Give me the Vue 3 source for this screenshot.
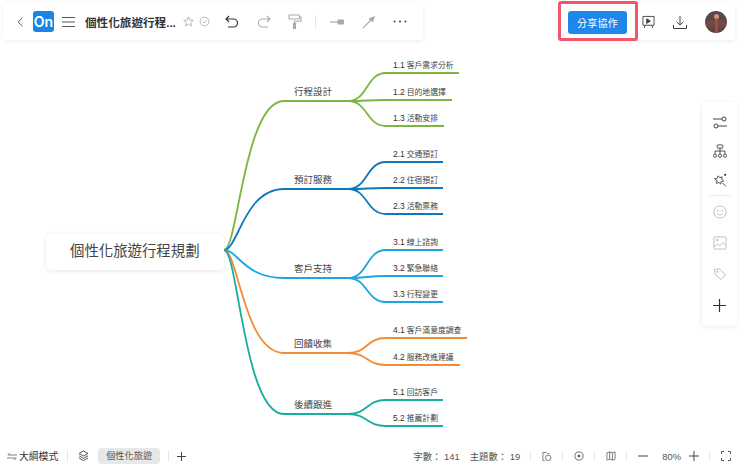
<script setup>
const ROOT = { x: 224, y: 250 };

const branches = [
  { title: '行程設計', y: 101, color: '#7cb540', leaves: [
    { num: '1.1', text: '客戶需求分析', y: 73, end: 459 },
    { num: '1.2', text: '目的地選擇', y: 100, end: 452 },
    { num: '1.3', text: '活動安排', y: 126, end: 444 },
  ] },
  { title: '預訂服務', y: 189, color: '#0e78bd', leaves: [
    { num: '2.1', text: '交通預訂', y: 162, end: 443 },
    { num: '2.2', text: '住宿預訂', y: 188, end: 443 },
    { num: '2.3', text: '活動票務', y: 214, end: 443 },
  ] },
  { title: '客戶支持', y: 278, color: '#1ba6e2', leaves: [
    { num: '3.1', text: '線上諮詢', y: 250, end: 443 },
    { num: '3.2', text: '緊急聯絡', y: 276, end: 443 },
    { num: '3.3', text: '行程變更', y: 302, end: 443 },
  ] },
  { title: '回饋收集', y: 353, color: '#f28b34', leaves: [
    { num: '4.1', text: '客戶滿意度調查', y: 338, end: 467 },
    { num: '4.2', text: '服務改進建議', y: 365, end: 460 },
  ] },
  { title: '後續跟進', y: 414, color: '#17ad9f', leaves: [
    { num: '5.1', text: '回訪客戶', y: 400, end: 443 },
    { num: '5.2', text: '推薦計劃', y: 426, end: 443 },
  ] },
];

const branchPath = (b) =>
  `M${ROOT.x} ${ROOT.y}C${ROOT.x + 14} ${ROOT.y} ${ROOT.x + 20} ${b.y} 284 ${b.y}L348 ${b.y}`;

const leafPath = (b, l) =>
  `M348 ${b.y}C368 ${b.y} 366 ${l.y} 386 ${l.y}L${l.end} ${l.y}`;
</script>

<template>
  <div class="page">
    <svg class="map" width="740" height="464" viewBox="0 0 740 464">
      <g v-for="b in branches" :key="b.title" fill="none" :stroke="b.color" stroke-width="1.8">
        <path v-for="l in b.leaves" :key="l.num" :d="leafPath(b, l)" />
        <path :d="branchPath(b)" />
      </g>
      <g v-for="b in branches" :key="b.title + '-t'">
        <text class="branch-text" x="294" :y="b.y - 6">{{ b.title }}</text>
        <text v-for="l in b.leaves" :key="l.num" class="leaf-text" x="393" :y="l.y - 5"><tspan class="leaf-num">{{ l.num }}</tspan> {{ l.text }}</text>
      </g>
    </svg>
    <div class="root-node">個性化旅遊行程規劃</div>

    <header class="top">
      <div class="panel left-panel">
        <svg class="back" width="7" height="10" viewBox="0 0 7 10"><path d="M5.5 .8L1.2 5l4.300 4.200" fill="none" stroke="#555" stroke-width="1" /></svg>
        <div class="logo">On</div>
        <svg width="13" height="12" viewBox="0 0 13 12" stroke="#555" stroke-width="1"><path d="M0 1.5h13M0 6h13M0 10.5h13" /></svg>
        <span class="doc-title">個性化旅遊行程...</span>
        <svg class="star" width="11" height="11" viewBox="0 0 12 12"><path d="M6 1l1.5 3.4 3.7.4-2.8 2.4.9 3.6L6 8.9l-3.3 1.9.9-3.6L.8 4.8l3.7-.4z" fill="none" stroke="#aaa" stroke-width=".9" /></svg>
        <svg class="check" width="11" height="11" viewBox="0 0 12 12" fill="none" stroke="#aaa" stroke-width=".9"><circle cx="6" cy="6" r="4.8" /><path d="M3.8 6l1.6 1.6 2.8-3" /></svg>
        <svg class="undo" width="14" height="13" viewBox="0 0 14 13" fill="none" stroke="#333" stroke-width="1.2"><path d="M4 1L1 4l3 3M1 4h7.5a4 4 0 0 1 0 8H3" /></svg>
        <svg class="redo" width="14" height="13" viewBox="0 0 14 13" fill="none" stroke="#aaa" stroke-width="1.1"><path d="M10 1l3 3-3 3M13 4H5.5a4 4 0 0 0 0 8H11" /></svg>
        <svg class="roller" width="14" height="15" viewBox="0 0 14 15" fill="none" stroke="#aaa" stroke-width="1.1"><rect x="1" y="1" width="10.5" height="4" rx=".8" /><path d="M11.5 3H13v4.200H6.5v2.300" /><rect x="5.5" y="9.5" width="2" height="5" fill="#aaa" /></svg>
        <i class="vline tall"></i>
        <svg class="link" width="14" height="8" viewBox="0 0 14 8"><path d="M0 4h8" stroke="#aaa" stroke-width="1.2" /><rect x="7.5" y="1.5" width="6.5" height="5" rx="1" fill="#aaa" /></svg>
        <svg class="arrow" width="14" height="14" viewBox="0 0 14 14"><path d="M1 13L10 4" stroke="#aaa" stroke-width="1.1" /><path d="M6.5 3.5L13 1l-2 6.500z" fill="#aaa" /></svg>
        <svg class="more" width="14" height="3" viewBox="0 0 14 3" fill="#444"><circle cx="1.5" cy="1.5" r="1" /><circle cx="7" cy="1.5" r="1" /><circle cx="12.5" cy="1.5" r="1" /></svg>
      </div>
      <div class="panel right-panel">
        <div class="share-box"><button class="share">分享協作</button></div>
        <svg class="present" width="13" height="14" viewBox="0 0 14 14" fill="none" stroke="#444" stroke-width="1"><path d="M1 1h12v9.500H1z" /><path d="M5 3.500l4 2.500-4 2.500z" fill="#444" /><path d="M3.500 10.500l-1 3M10.500 10.500l1 3" /></svg>
        <svg class="download" width="14" height="14" viewBox="0 0 14 14" fill="none" stroke="#444" stroke-width="1"><path d="M7 1v9M3.700 6.800L7 10l3.300-3.200M.5 10v3.500h13V10" /></svg>
        <div class="avatar"><i class="reflect"></i><i class="sun"></i></div>
      </div>
    </header>

    <aside class="side">
      <div class="side-group top-group">
        <svg width="14" height="13" viewBox="0 0 14 13" fill="none" stroke="#444" stroke-width="1"><path d="M0 3h9M5 10h9" /><circle cx="11" cy="3" r="2" /><circle cx="3" cy="10" r="2" /></svg>
        <svg width="14" height="14" viewBox="0 0 15 15" fill="none" stroke="#444" stroke-width="1"><rect x="4.5" y="1" width="6" height="3.500" rx=".6" /><path d="M7.5 4.500V10.500M2.200 10.500V7.500h10.600v3" /><circle cx="2.200" cy="12.500" r="1.700" /><circle cx="7.5" cy="12.500" r="1.700" /><circle cx="12.800" cy="12.500" r="1.700" /></svg>
        <svg width="14" height="14" viewBox="0 0 15 15" fill="none" stroke="#444" stroke-width="1"><path d="M5.500 3l1.700 2 2.600-.9-.5 2.700 2 1.700-2.600.6-.6 2.700-1.900-1.700-2.500 1 .7-2.700L1.500 6.200l2.700-.2z" /><path d="M10 10.500l4 4" /><circle cx="13" cy="2" r="1.200" fill="#444" stroke="none" /></svg>
      </div>
      <i class="hline"></i>
      <div class="side-group">
        <svg width="14" height="14" viewBox="0 0 15 15" fill="none" stroke="#bbb" stroke-width="1"><circle cx="7.5" cy="7.5" r="6.500" /><circle cx="5.300" cy="6" r=".5" fill="#bbb" /><circle cx="9.700" cy="6" r=".5" fill="#bbb" /><path d="M4.500 9.300c1.500 1.800 4.500 1.800 6 0" /></svg>
        <svg width="14" height="14" viewBox="0 0 15 15" fill="none" stroke="#bbb" stroke-width="1"><rect x="1" y="1" width="13" height="13" rx="1" /><circle cx="4.500" cy="4.500" r="1" /><path d="M1.500 11.500l3.500-3 2.500 2 3-3.500 3 2.500" /></svg>
        <svg width="14" height="14" viewBox="0 0 15 15" fill="none" stroke="#bbb" stroke-width="1"><path d="M1.500 2.500l5.500-.5 6.500 6.500-5 5L2 7.500z" /><circle cx="4.800" cy="5" r=".8" /></svg>
        <svg class="add" width="13" height="13" viewBox="0 0 13 13" stroke="#333" stroke-width="1.200"><path d="M6.500 0v13M0 6.500h13" /></svg>
      </div>
    </aside>

    <footer class="status">
      <div class="status-left">
        <svg class="swap" width="10" height="9" viewBox="0 0 10 9" fill="none" stroke="#777" stroke-width=".9"><path d="M3 .8L.8 3H10M7 8.200L9.200 6H0" /></svg>
        <span class="outline">大綱模式</span>
        <i class="vline"></i>
        <svg class="layers" width="11" height="12" viewBox="0 0 11 12" fill="none" stroke="#555" stroke-width="1"><path d="M5.500 1L10 3.500 5.500 6 1 3.500z" /><path d="M1 5.800L5.500 8.300 10 5.800M1 8l4.500 2.500L10 8" /></svg>
        <span class="tab">個性化旅遊</span>
        <i class="vline tab-line"></i>
        <svg class="tab-add" width="9" height="9" viewBox="0 0 9 9" stroke="#444" stroke-width="1"><path d="M4.500 0v9M0 4.500h9" /></svg>
      </div>
      <div class="status-right">
        <span>字數： 141</span>
        <span class="topics">主題數： 19</span>
        <i class="vline"></i>
        <svg width="10" height="11" viewBox="0 0 11 11" fill="none" stroke="#666" stroke-width=".9"><path d="M5 1H1v9h2" /><circle cx="6.800" cy="7" r="3" /><path d="M5.500 2.500h3" /></svg>
        <i class="vline"></i>
        <svg width="10" height="10" viewBox="0 0 11 11" fill="none" stroke="#555" stroke-width=".9"><circle cx="5.500" cy="5.500" r="4.500" /><circle cx="5.500" cy="5.500" r="1.200" fill="#555" /></svg>
        <i class="vline"></i>
        <svg width="10" height="10" viewBox="0 0 11 10" fill="none" stroke="#666" stroke-width=".9"><path d="M1 1.500l3-1 3 1 3-1v8l-3 1-3-1-3 1zM4 .5v8M7 1.500v8" /></svg>
        <i class="vline"></i>
        <svg class="minus" width="10" height="2" viewBox="0 0 10 2" stroke="#444" stroke-width="1"><path d="M0 1h10" /></svg>
        <span class="zoom-val">80%</span>
        <svg width="10" height="10" viewBox="0 0 10 10" stroke="#444" stroke-width="1"><path d="M5 0v10M0 5h10" /></svg>
        <i class="vline"></i>
        <svg width="10" height="10" viewBox="0 0 10 10" fill="none" stroke="#555" stroke-width="1"><path d="M.5 3V.5H3M7 .5h2.500V3M9.500 7v2.500H7M3 9.500H.5V7" /></svg>
      </div>
    </footer>
  </div>
</template>

<style scoped>
.page {
  position: relative;
  display: flex;
  flex-direction: column;
  justify-content: space-between;
  width: 740px;
  height: 464px;
  overflow: hidden;
  background: #fff;
  color: #333;
  font-family: "Liberation Sans", "Noto Sans CJK TC", sans-serif;
}
.map {
  position: absolute;
  top: 0;
  left: 0;
}
.branch-text {
  font-family: "Liberation Serif", "Noto Sans CJK TC", serif;
  font-size: 9.5px;
  fill: #444;
}
.leaf-text {
  font-family: "Liberation Serif", "Noto Sans CJK TC", serif;
  font-size: 7.8px;
  fill: #444;
}
.leaf-num {
  font-family: "Liberation Sans", sans-serif;
  font-size: 8.5px;
  fill: #333;
}
.root-node {
  position: absolute;
  left: 46px;
  top: 234px;
  width: 178px;
  height: 36px;
  box-sizing: border-box;
  padding-left: 24px;
  line-height: 35px;
  font-size: 14.4px;
  color: #444;
  white-space: nowrap;
  font-family: "Liberation Serif", "Noto Sans CJK TC", serif;
  background: #fff;
  border-radius: 5px;
  box-shadow: 0 1px 5px rgba(0, 0, 0, 0.1);
}
.top {
  position: relative;
  display: flex;
  justify-content: space-between;
  padding: 3px 5px 0 3px;
}
.panel {
  display: flex;
  align-items: center;
  height: 37px;
  background: #fff;
  box-shadow: 0 1px 5px rgba(0, 0, 0, 0.07);
  border-radius: 4px;
}
.left-panel {
  width: 420px;
  padding-left: 14px;
  box-sizing: border-box;
}
.logo {
  width: 21px;
  height: 21px;
  margin: 0 8px 0 9px;
  background: #1a84e4;
  color: #fff;
  font-family: Inter, "Liberation Sans", sans-serif;
  font-size: 14px;
  font-weight: 600;
  line-height: 21px;
  text-align: center;
  border-radius: 3px;
}
.doc-title {
  margin-left: 10px;
  font-size: 11.6px;
  font-weight: 700;
  color: #333;
  white-space: nowrap;
}
.star { margin-left: 7px; }
.check { margin-left: 5px; }
.undo { margin-left: 15px; }
.redo { margin-left: 18px; }
.roller { margin-left: 17px; }
.vline {
  display: block;
  flex: none;
  width: 1px;
  height: 12px;
  background: #e6e6e6;
}
.vline.tall {
  height: 14px;
  margin-left: 13px;
}
.link { margin-left: 14px; }
.arrow { margin-left: 18px; }
.more { margin-left: 17px; }
.right-panel {
  position: relative;
  width: 177px;
  box-sizing: border-box;
}
.share-box {
  box-sizing: border-box;
  width: 80px;
  height: 40px;
  margin-top: -1px;
  padding: 7px 7px 0;
  border: 3px solid #f2566f;
  border-radius: 3px;
  background: #fff;
}
.share {
  display: block;
  width: 59px;
  height: 23px;
  padding: 0;
  border: 0;
  border-radius: 3px;
  background: #1f87ea;
  color: #fff;
  font-family: inherit;
  font-size: 10px;
  letter-spacing: 0.3px;
}
.present { margin-left: 4px; }
.download { margin-left: 18px; }
.avatar {
  position: relative;
  overflow: hidden;
  width: 22px;
  height: 22px;
  margin-left: 18px;
  border-radius: 50%;
  background: linear-gradient(#55484c 0 35%, #7a4a45 55%, #4a4042 100%);
}
.sun {
  position: absolute;
  left: 9px;
  top: 3px;
  width: 5px;
  height: 5px;
  border-radius: 50%;
  background: #d9906f;
}
.reflect {
  position: absolute;
  left: 10px;
  top: 8px;
  width: 3px;
  height: 14px;
  background: #a64d3a;
}
.side {
  position: absolute;
  right: 3px;
  top: 102px;
  display: flex;
  flex-direction: column;
  align-items: center;
  width: 35px;
  height: 224px;
  padding-top: 14px;
  box-sizing: border-box;
  background: #fff;
  border-radius: 4px;
  box-shadow: 0 1px 5px rgba(0, 0, 0, 0.08);
}
.side-group {
  display: flex;
  flex-direction: column;
  align-items: center;
  gap: 17px;
}
.top-group { gap: 15px; }
.hline {
  display: block;
  flex: none;
  width: 24px;
  height: 1px;
  margin: 8px 0 9px;
  background: #eee;
}
.add { margin-top: 1px; }
.status {
  position: relative;
  display: flex;
  justify-content: space-between;
  align-items: center;
  height: 16px;
  padding: 0 9px 0 7px;
  font-size: 9.4px;
  color: #555;
}
.status-left,
.status-right {
  display: flex;
  align-items: center;
}
.outline {
  margin-left: 2px;
  font-size: 9.8px;
  color: #333;
}
.status-left .vline { margin-left: 9px; }
.layers { margin-left: 10px; }
.tab {
  margin-left: 9px;
  padding: 0 8px;
  line-height: 16px;
  height: 16px;
  background: #e7e8e8;
  border-radius: 4px;
  font-size: 9.2px;
  color: #555;
}
.status-left .tab-line { margin-left: 8px; }
.tab-add { margin-left: 8px; }
.status-right .vline {
  height: 10px;
  margin: 0 11px 0 10px;
}
.topics { margin-left: 10px; }
.zoom-val {
  margin: 0 8px 0 14px;
  font-size: 9.4px;
}
</style>
